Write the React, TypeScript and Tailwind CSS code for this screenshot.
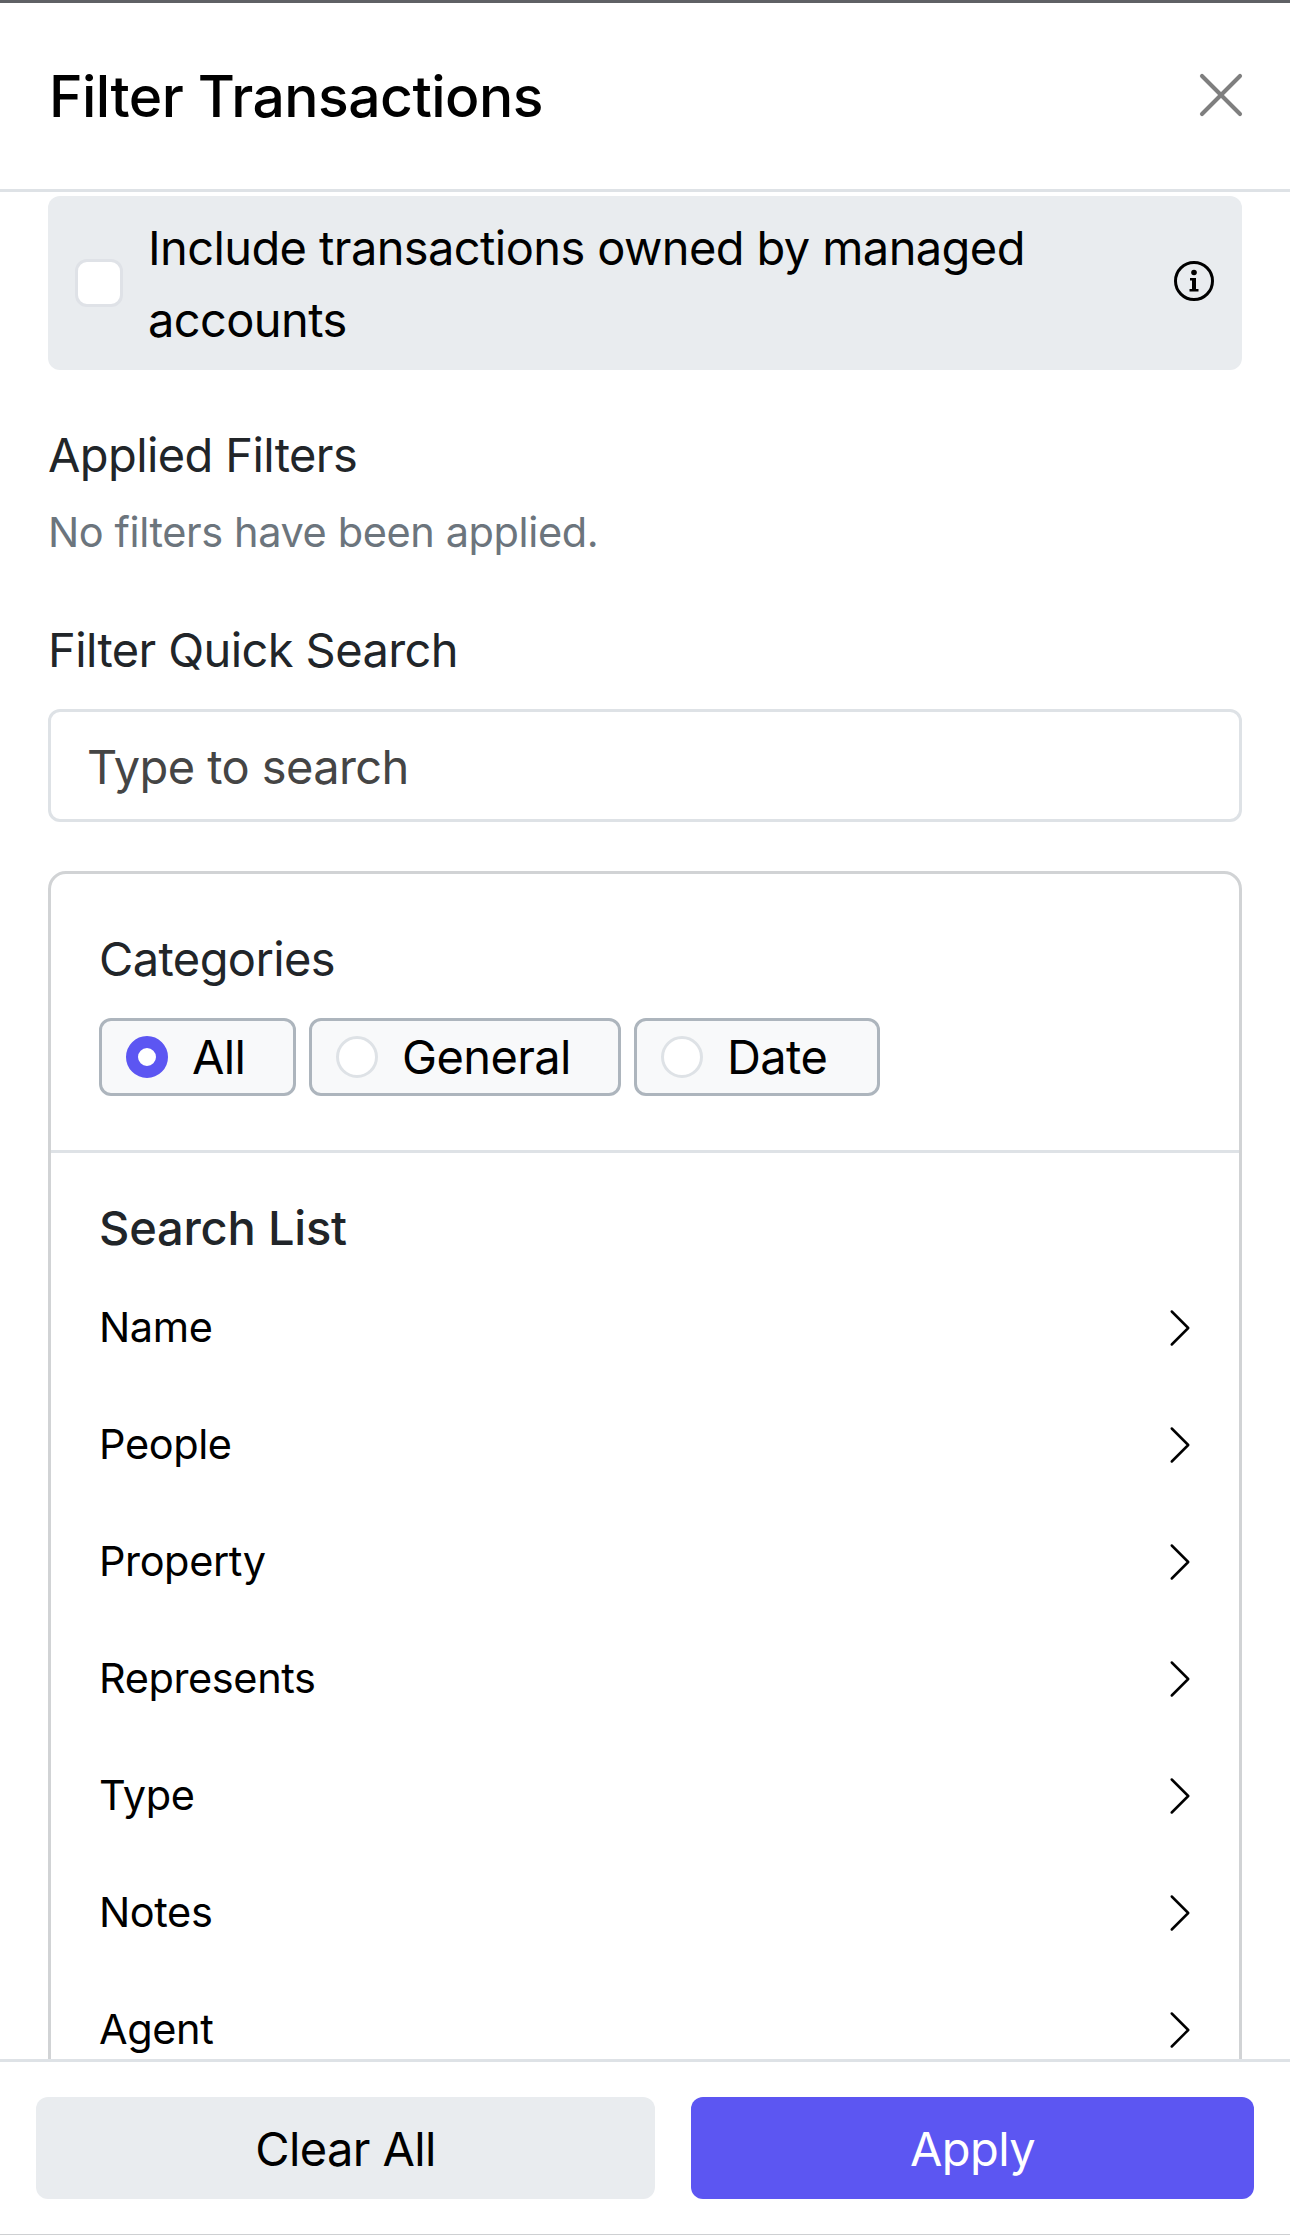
import { ChevronRight, X } from 'lucide-react';

const searchItems = ['Name', 'People', 'Property', 'Represents', 'Type', 'Notes', 'Agent'];

const categories = [
  { label: 'All', width: 'w-[197px]', active: true },
  { label: 'General', width: 'w-[312px]', active: false },
  { label: 'Date', width: 'w-[246px]', active: false },
];

function InfoIcon() {
  return (
    <svg viewBox="0 0 40 40" className="w-[40px] h-[40px] shrink-0 mb-[4px]" fill="none">
      <circle cx="20" cy="20" r="18.5" stroke="#000" strokeWidth="3" />
      <circle cx="20" cy="11.5" r="2.8" fill="#000" />
      <path d="M16 17h6v11h2.500v2.500h-9V28H18v-8.500h-2z" fill="#000" />
    </svg>
  );
}

export default function App() {
  return (
    <div className="h-[2235px] flex flex-col overflow-hidden bg-white border-t-[3px] border-b-[1px] border-t-[#5f6165] border-b-[#ced0d2] text-[#000] font-['Inter',sans-serif] text-[47px] tracking-[-0.6px]">
      {/* Header */}
      <div className="h-[189px] shrink-0 flex items-center justify-between pl-[49px] pr-[48px] border-b-[3px] border-[#dee2e6]">
        <h1 className="text-[57px] font-medium tracking-[-0.55px] pt-[1px]">Filter Transactions</h1>
        <X className="w-[76px] h-[76px] -mr-[17px] mb-[3px] text-[#7f7f7f]" strokeWidth={1.3} />
      </div>

      {/* Scroll body */}
      <div className="flex-1 min-h-0 overflow-hidden px-[48px] pt-[4px]">
        <div className="h-[174px] flex items-center bg-[#e9ecef] rounded-[12px] pl-[27px] pr-[28px]">
          <div className="w-[48px] h-[48px] shrink-0 bg-white border-[3px] border-[#dfe2e7] rounded-[12px]" />
          <p className="flex-1 pl-[25px] pr-[100px] pt-[1px] leading-[72px]">
            Include transactions owned by managed accounts
          </p>
          <InfoIcon />
        </div>

        <h2 className="mt-[58px] leading-[54px] text-[#212529]">Applied Filters</h2>
        <p className="mt-[23px] text-[41.500px] tracking-[-0.4px] leading-[54px] text-[#6c757d]">No filters have been applied.</p>

        <h2 className="mt-[64px] leading-[54px] text-[#212529]">Filter Quick Search</h2>
        <div className="mt-[32px] h-[113px] flex items-center px-[36px] pt-[3px] border-[3px] border-[#dee2e6] rounded-[12px] text-[#454545]">
          Type to search
        </div>

        {/* Filter card */}
        <div className="mt-[49px] border-[3px] border-[#d1d3d5] rounded-[18px] pb-[40px]">
          <div className="h-[279px] border-b-[3px] border-[#dee2e6] px-[48px] pt-[58px]">
            <p className="leading-[54px] text-[#212529]">Categories</p>
            <div className="mt-[32px] flex gap-[13px]">
              {categories.map((cat) => (
                <div
                  key={cat.label}
                  className={`${cat.width} h-[78px] flex items-center gap-[24px] pl-[24px] bg-[#f8f9fa] border-[3px] border-[#adb5bd] rounded-[12px]`}
                >
                  {cat.active ? (
                    <div className="w-[42px] h-[42px] rounded-full bg-white border-[12px] border-[#5c56f2]" />
                  ) : (
                    <div className="w-[42px] h-[42px] rounded-full bg-white border-[3px] border-[#dee2e6]" />
                  )}
                  <span className="leading-[54px]">{cat.label}</span>
                </div>
              ))}
            </div>
          </div>

          <div className="px-[48px] pt-[48px]">
            <h3 className="leading-[54px] font-medium tracking-[-0.2px] text-[#212529]">Search List</h3>
            <div className="mt-[14px] flex flex-col">
              {searchItems.map((item) => (
                <div key={item} className="h-[117px] flex items-center justify-between">
                  <span className="text-[41.500px] tracking-[-0.4px]">{item}</span>
                  <ChevronRight className="w-[66px] h-[66px] -mr-[22px]" strokeWidth={0.9} />
                </div>
              ))}
            </div>
          </div>
        </div>
      </div>

      {/* Footer */}
      <div className="h-[175px] shrink-0 flex gap-[36px] pl-[36px] pr-[36px] pt-[35px] border-t-[3px] border-[#dee2e6] bg-white">
        <button className="w-[619px] h-[102px] pt-[2px] rounded-[12px] bg-[#e9ecef] text-[#000]">Clear All</button>
        <button className="w-[563px] h-[102px] pt-[2px] rounded-[12px] bg-[#5c56f2] text-white">Apply</button>
      </div>
    </div>
  );
}
